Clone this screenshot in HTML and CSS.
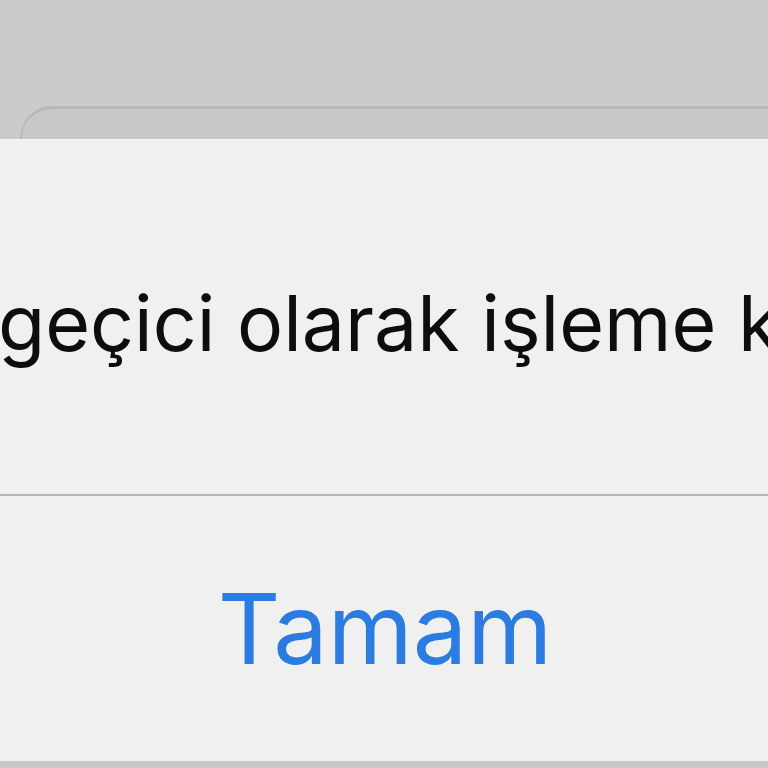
FILE: index.html
```html
<!DOCTYPE html>
<html lang="tr">
<head>
<meta charset="utf-8">
<link rel="stylesheet" href="styles.css">
</head>
<body>
<div class="screen">
  <div class="backdrop">
    <div class="sheet"></div>
  </div>
  <div class="alert">
    <div class="message"><span class="msg-text">geçici olarak işleme k</span></div>
    <div class="divider"></div>
    <div class="actions"><span class="action">Tamam</span></div>
  </div>
  <div class="below"></div>
</div>
</body>
</html>
```
FILE: styles.css
```css
html, body {
  margin: 0;
  padding: 0;
  width: 768px;
  height: 768px;
  overflow: hidden;
  background: #c6c8c6;
}
.screen {
  display: flex;
  flex-direction: column;
  width: 768px;
  height: 768px;
}
.backdrop {
  height: 139px;
  background: #cbcbcb;
  display: flex;
  flex-direction: column;
  justify-content: flex-end;
}
.sheet {
  height: 30px;
  margin-left: 20px;
  background: #c8c8c8;
  border-top: 3px solid #b8b8b8;
  border-left: 2px solid #bcbcbc;
  border-top-left-radius: 32px;
}
.alert {
  background: #f0f0f0;
  display: flex;
  flex-direction: column;
  height: 622px;
  box-shadow: inset 0 2px 2px -1px #f8f8f8;
}
.message {
  height: 355px;
  display: flex;
  align-items: center;
  white-space: nowrap;
  overflow: hidden;
}
.msg-text {
  font-family: Inter, "Liberation Sans", sans-serif;
  font-size: 77px;
  color: #0d0d0d;
  margin-left: -2px;
  padding-top: 12px;
}
.divider {
  height: 2px;
  background: #b6b6b6;
}
.actions {
  flex: 1;
  display: flex;
  justify-content: center;
  align-items: center;
}
.action {
  font-family: Inter, "Liberation Sans", sans-serif;
  font-size: 97px;
  color: #2b7be0;
  margin-left: 2px;
}
.below {
  flex: 1;
  background: #c6c8c6;
}
```
